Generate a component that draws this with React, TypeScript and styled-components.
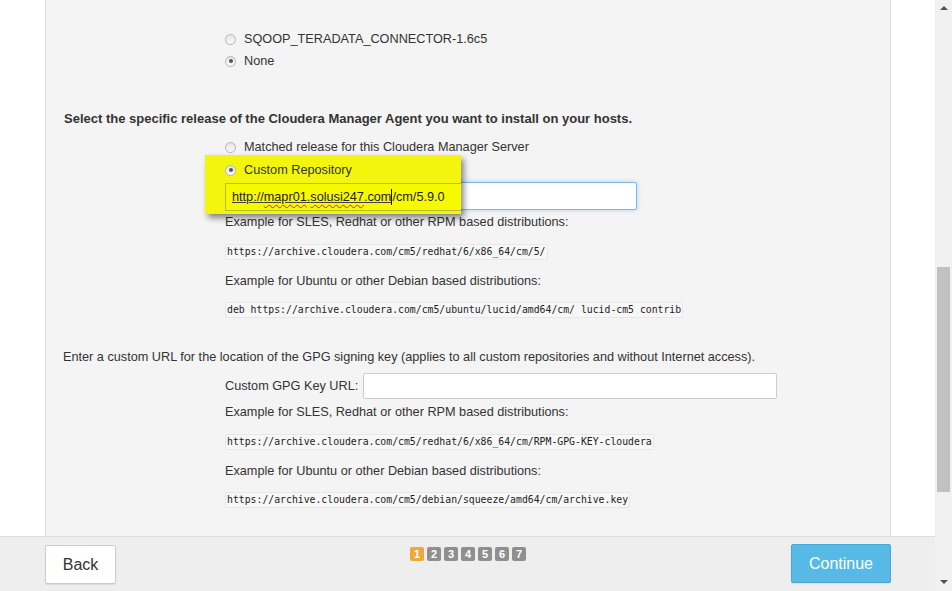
import React from 'react';
import styled, { createGlobalStyle } from 'styled-components';

const GlobalStyle = createGlobalStyle`
  html, body {
    margin: 0;
    padding: 0;
    background: #fff;
    font-family: "Liberation Sans", Arial, sans-serif;
    font-size: 12.7px;
    color: #333;
    overflow: hidden;
  }
`;

const Screen = styled.div`
  display: flex;
  width: 952px;
  height: 591px;
`;

const Main = styled.div`
  width: 935px;
  display: flex;
  flex-direction: column;
`;

const Viewport = styled.div`
  height: 536px;
  overflow: hidden;
  display: flex;
  padding-left: 45px;
  box-sizing: border-box;
`;

const Panel = styled.div`
  width: 846px;
  border-left: 1px solid #ddd;
  border-right: 1px solid #ddd;
  background: #f4f4f4;
  padding: 28px 18px 0;
  box-sizing: border-box;
`;

const Indent = styled.div<{ $top?: number }>`
  margin-left: 161px;
  margin-top: ${p => p.$top ?? 0}px;
  position: relative;
`;

const RadioRow = styled.div`
  display: flex;
  align-items: center;
  height: 22px;
  gap: 8px;
`;

const Radio = styled.span<{ $checked?: boolean }>`
  width: 9px;
  height: 9px;
  border-radius: 50%;
  border: 1px solid #b5b5b5;
  background: linear-gradient(#e6e6e6, #fafafa);
  display: inline-flex;
  align-items: center;
  justify-content: center;
  flex: none;
  &::after {
    content: '';
    width: 4px;
    height: 4px;
    border-radius: 50%;
    background: ${p => (p.$checked ? '#555' : 'transparent')};
  }
`;

const Heading = styled.div<{ $top: number }>`
  font-weight: bold;
  font-size: 13px;
  line-height: 20px;
  margin-top: ${p => p.$top}px;
`;

const Line = styled.div<{ $top: number }>`
  line-height: 20px;
  margin-top: ${p => p.$top}px;
  white-space: nowrap;
`;

const Code = styled.code<{ $top: number }>`
  display: inline-block;
  margin-top: ${p => p.$top}px;
  font-family: "DejaVu Sans Mono", "Liberation Mono", monospace;
  font-size: 9.8px;
  line-height: 14px;
  padding: 0 1px;
  background: #f7f7f7;
  border: 1px solid #e8e8e8;
  border-radius: 2px;
  color: #222;
  white-space: nowrap;
`;

const CodeWrap = styled.div``;

const TextInput = styled.input<{ $width: number; $focus?: boolean }>`
  display: block;
  width: ${p => p.$width}px;
  height: 28px;
  box-sizing: border-box;
  border: 1px solid ${p => (p.$focus ? '#7fb6e6' : '#ccc')};
  box-shadow: ${p => (p.$focus ? '0 0 4px rgba(102,175,233,0.5)' : 'none')};
  border-radius: 2px;
  background: #fff;
  font: inherit;
  padding: 0 6px;
  color: #333;
  outline: none;
`;

const FieldRow = styled.div<{ $top: number }>`
  display: flex;
  align-items: center;
  gap: 5px;
  margin-top: ${p => p.$top}px;
  input {
    height: 26px;
  }
`;

const Highlight = styled.div`
  position: absolute;
  left: -20px;
  top: 19px;
  width: 256px;
  height: 59px;
  background: #f3f60c;
  box-shadow: 3px 4px 6px rgba(0, 0, 0, 0.45);
  overflow: hidden;
  padding: 4px 0 0 20px;
  box-sizing: border-box;
`;

const MarkedInput = styled.div`
  margin-top: 2px;
  width: 300px;
  height: 28px;
  box-sizing: border-box;
  border: 1px solid #b8bc30;
  background: #f6f900;
  display: flex;
  align-items: center;
  padding-left: 6px;
  white-space: nowrap;
  color: #222;
`;

const Link = styled.span`
  text-decoration: underline;
  text-decoration-color: #444;
`;

const Spell = styled.span`
  text-decoration: underline wavy #e02020;
  text-decoration-thickness: 1px;
  text-underline-offset: 3px;
`;

const Caret = styled.span`
  display: inline-block;
  width: 1px;
  height: 16px;
  background: #111;
  vertical-align: middle;
`;

const Footer = styled.div`
  height: 55px;
  border-top: 1px solid #ddd;
  background: #eee;
  box-sizing: border-box;
  display: grid;
  grid-template-columns: 1fr auto 1fr;
  align-items: start;
  padding: 7px 44px 0 45px;
`;

const Button = styled.button<{ $primary?: boolean }>`
  height: 39px;
  width: ${p => (p.$primary ? 100 : 71)}px;
  margin-top: ${p => (p.$primary ? 0 : 1)}px;
  justify-self: ${p => (p.$primary ? 'end' : 'start')};
  border-radius: 2px;
  border: 1px solid ${p => (p.$primary ? '#46a9d6' : '#ccc')};
  background: ${p => (p.$primary ? '#56b9e6' : '#fff')};
  color: ${p => (p.$primary ? '#fff' : '#333')};
  font-family: "Liberation Sans", Arial, sans-serif;
  font-size: 16px;
  box-shadow: 0 1px 1px rgba(0, 0, 0, 0.08);
`;

const Steps = styled.div`
  display: flex;
  gap: 3px;
  margin-top: 3px;
`;

const Step = styled.span<{ $active?: boolean }>`
  width: 14px;
  height: 14px;
  border-radius: 2px;
  background: ${p => (p.$active ? '#eeaa35' : '#8f8f8f')};
  color: #fff;
  font-weight: bold;
  font-size: 11px;
  display: flex;
  align-items: center;
  justify-content: center;
`;

const Scrollbar = styled.div`
  width: 17px;
  background: #f1f1f1;
  display: flex;
  flex-direction: column;
  align-items: center;
`;

const Arrow = styled.div<{ $down?: boolean }>`
  width: 0;
  height: 0;
  border-left: 4px solid transparent;
  border-right: 4px solid transparent;
  ${p => (p.$down ? 'border-top: 4px solid #505050;' : 'border-bottom: 4px solid #505050;')}
  margin-top: ${p => (p.$down ? 88 : 6)}px;
`;

const Thumb = styled.div`
  width: 13px;
  height: 225px;
  margin-top: 257px;
  background: #c1c1c1;
`;

const App: React.FC = () => {
  const steps = [1, 2, 3, 4, 5, 6, 7];
  return (
    <>
      <GlobalStyle />
      <Screen>
        <Main>
          <Viewport>
            <Panel>
              <Indent>
                <RadioRow><Radio />SQOOP_TERADATA_CONNECTOR-1.6c5</RadioRow>
                <RadioRow><Radio $checked />None</RadioRow>
              </Indent>

              <Heading $top={37}>
                Select the specific release of the Cloudera Manager Agent you want to install on your hosts.
              </Heading>

              <Indent $top={7}>
                <RadioRow><Radio />Matched release for this Cloudera Manager Server</RadioRow>
                <RadioRow><Radio $checked />Custom Repository</RadioRow>
                <TextInput
                  $width={412}
                  $focus
                  style={{ marginTop: 2 }}
                  readOnly
                  defaultValue=""
                />
                <Highlight>
                  <RadioRow><Radio $checked />Custom Repository</RadioRow>
                  <MarkedInput>
                    <Link>
                      http://<Spell>mapr01</Spell>.<Spell>solusi247</Spell>.com
                    </Link>
                    <Caret />
                    /cm/5.9.0
                  </MarkedInput>
                </Highlight>
                <Line $top={2}>Example for SLES, Redhat or other RPM based distributions:</Line>
                <CodeWrap>
                  <Code $top={12}>https://archive.cloudera.com/cm5/redhat/6/x86_64/cm/5/</Code>
                </CodeWrap>
                <Line $top={11}>Example for Ubuntu or other Debian based distributions:</Line>
                <CodeWrap>
                  <Code $top={11}>deb https://archive.cloudera.com/cm5/ubuntu/lucid/amd64/cm/ lucid-cm5 contrib</Code>
                </CodeWrap>
              </Indent>

              <Line $top={29} style={{ marginLeft: -1 }}>
                Enter a custom URL for the location of the GPG signing key (applies to all custom repositories and without Internet access).
              </Line>

              <Indent>
                <FieldRow $top={6}>
                  Custom GPG Key URL:
                  <TextInput $width={414} readOnly defaultValue="" />
                </FieldRow>
                <Line $top={3}>Example for SLES, Redhat or other RPM based distributions:</Line>
                <CodeWrap>
                  <Code $top={12}>https://archive.cloudera.com/cm5/redhat/6/x86_64/cm/RPM-GPG-KEY-cloudera</Code>
                </CodeWrap>
                <Line $top={11}>Example for Ubuntu or other Debian based distributions:</Line>
                <CodeWrap>
                  <Code $top={11}>https://archive.cloudera.com/cm5/debian/squeeze/amd64/cm/archive.key</Code>
                </CodeWrap>
              </Indent>
            </Panel>
          </Viewport>
          <Footer>
            <Button>Back</Button>
            <Steps>
              {steps.map(n => (
                <Step key={n} $active={n === 1}>{n}</Step>
              ))}
            </Steps>
            <Button $primary>Continue</Button>
          </Footer>
        </Main>
        <Scrollbar>
          <Arrow />
          <Thumb />
          <Arrow $down />
        </Scrollbar>
      </Screen>
    </>
  );
};

export default App;
